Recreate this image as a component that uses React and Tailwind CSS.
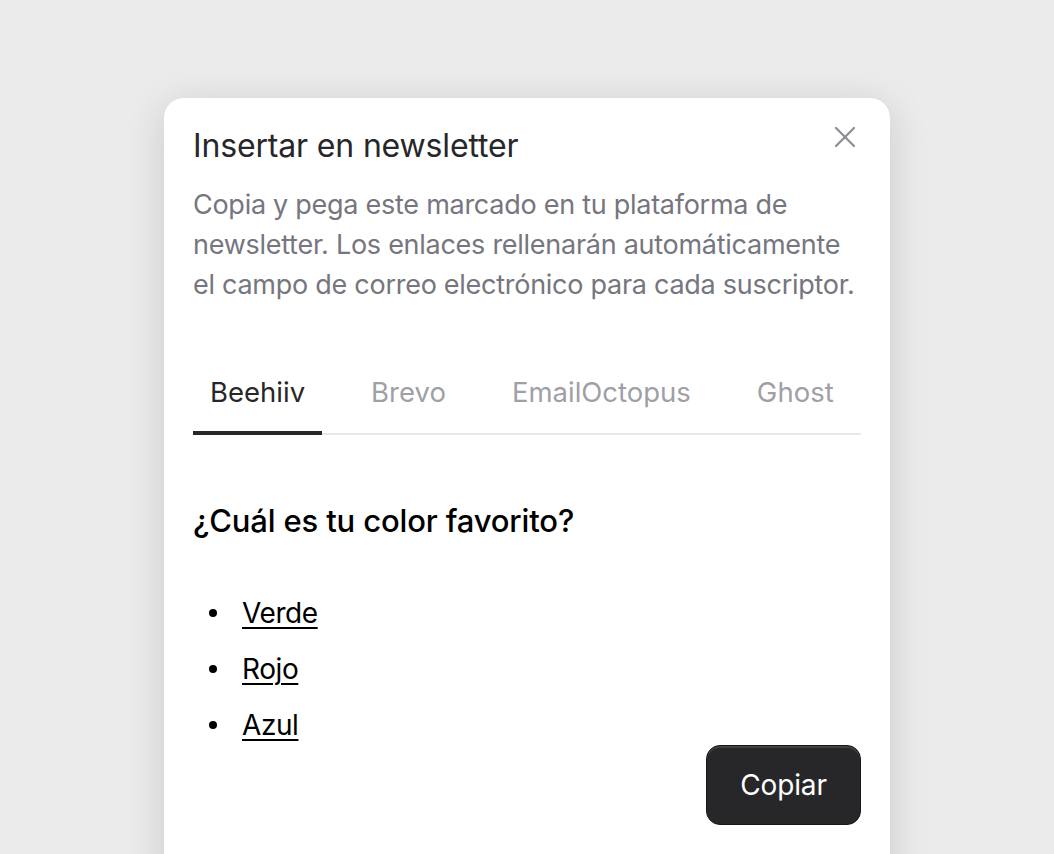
import { X } from 'lucide-react'

const TABS = ['Beehiiv', 'Brevo', 'EmailOctopus', 'Ghost']
const COLORS = ['Verde', 'Rojo', 'Azul']

export default function App() {
  const active = 'Beehiiv'

  return (
    <div
      className="h-screen overflow-hidden bg-[#ebebeb] flex justify-center pt-[98px]"
      style={{ fontFamily: 'Inter, "Liberation Sans", sans-serif' }}
    >
      <div className="w-[726px] h-[800px] bg-white rounded-[20px] shadow-[0_8px_40px_rgba(0,0,0,0.14)] px-[29px] pt-[30px] relative">
        {/* Close */}
        <button className="absolute right-[27px] top-[21px] text-[#8e8e96]">
          <X size={36} strokeWidth={1.5} />
        </button>

        {/* Header */}
        <h2 className="text-[32px] leading-[36px] text-[#27272a] tracking-[-0.005em]">
          Insertar en newsletter
        </h2>
        <p className="mt-[21px] text-[27px] leading-[40px] text-[#76767e] tracking-[-0.01em]">
          Copia y pega este marcado en tu plataforma de newsletter. Los enlaces rellenarán automáticamente el campo de correo electrónico para cada suscriptor.
        </p>

        {/* Tabs */}
        <div className="mt-[44px] flex gap-[32px] border-b-2 border-[#e8e8e8]">
          {TABS.map((tab) => (
            <button
              key={tab}
              className={`px-[17px] pt-[27px] pb-[23px] -mb-[2px] text-[27.5px] leading-[32px] border-b-4 ${
                tab === active ? 'text-[#27272a] border-[#27272a]' : 'text-[#9f9fa7] border-transparent'
              }`}
            >
              {tab}
            </button>
          ))}
        </div>

        {/* Preview */}
        <h3 className="mt-[68px] text-[31px] leading-[36px] font-medium text-black tracking-[-0.005em]">
          ¿Cuál es tu color favorito?
        </h3>
        <ul className="mt-[54px] flex flex-col gap-[16px]">
          {COLORS.map((c) => (
            <li key={c} className="flex items-center h-[40px]">
              <span className="ml-[16px] mr-[25px] w-[8px] h-[8px] rounded-full bg-black" />
              <a className="text-[28px] leading-[40px] text-black underline underline-offset-[4px] decoration-[2px] tracking-[-0.015em]">
                {c}
              </a>
            </li>
          ))}
        </ul>

        <div className="flex justify-end">
          <button className="w-[155px] h-[80px] rounded-[14px] bg-[#27272a] border border-[#18181b] shadow-[inset_0_2px_0_rgba(255,255,255,0.12)] text-white text-[28px] tracking-[-0.005em]">
            Copiar
          </button>
        </div>
      </div>
    </div>
  )
}
